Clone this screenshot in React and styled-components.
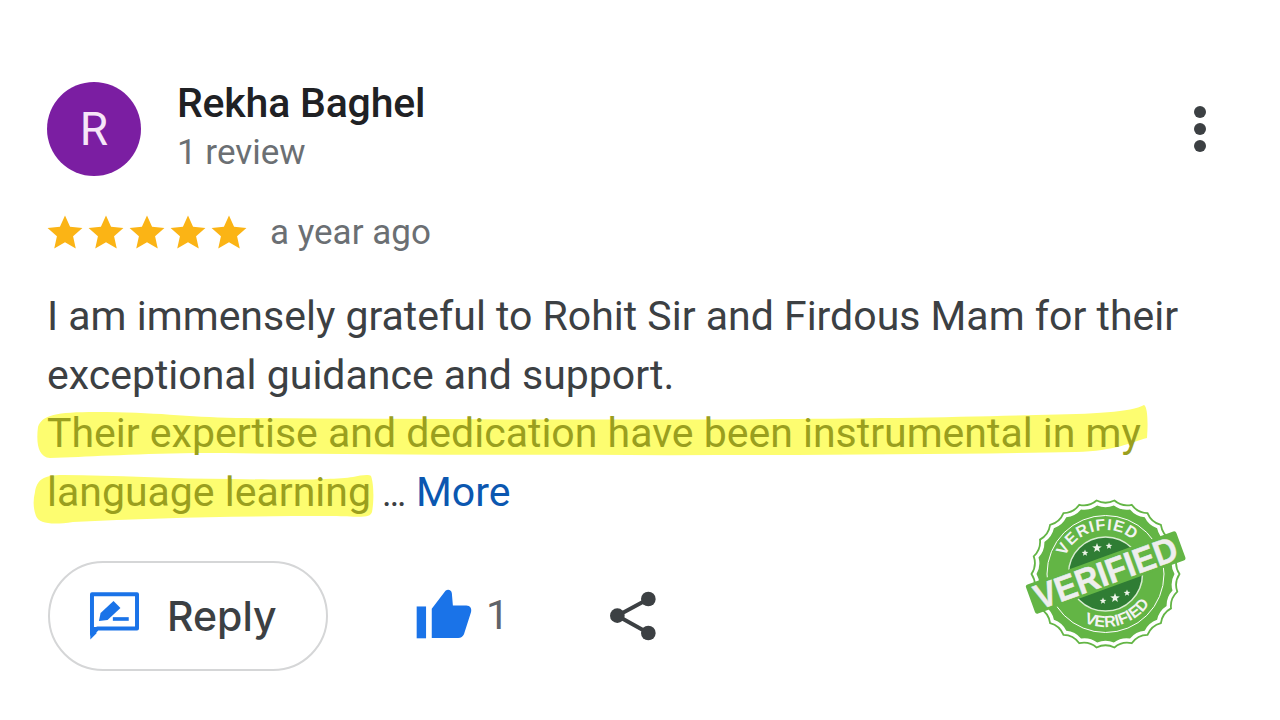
import React from "react";
import styled, { createGlobalStyle } from "styled-components";

const GlobalStyle = createGlobalStyle`
  html,body{margin:0;padding:0;background:#fff;}
  body{font-family:"Roboto","Liberation Sans",sans-serif;}
`;

const Card = styled.div`
  position:relative;
  isolation:isolate;
  width:1280px;height:720px;
  box-sizing:border-box;
  padding:82px 73px 0 47px;
  overflow:hidden;
  background:#fff;
`;

const Header = styled.div`
  display:flex;
  align-items:flex-start;
`;

const Avatar = styled.div`
  width:94px;height:94px;
  flex:none;
  border-radius:50%;
  background:#7b1ea2;
  color:#f6e6f8;
  display:flex;align-items:center;justify-content:center;
  font-size:46px;
`;

const Who = styled.div`
  margin-left:36px;
  display:flex;
  flex-direction:column;
`;

const Name = styled.div`
  font-size:41px;line-height:44px;
  font-weight:500;
  color:#202124;
  margin-top:-1px;
  letter-spacing:-0.2px;
`;

const Count = styled.div`
  font-size:35px;line-height:40px;
  margin-top:8px;
  color:#6b6f73;
`;

const Menu = styled.svg`
  margin-left:auto;
  margin-top:23px;
  flex:none;
`;

const Rating = styled.div`
  display:flex;
  align-items:center;
  margin-top:36px;
  height:40px;
`;

const Stars = styled.div`
  display:flex;
  gap:3px;
  margin-left:-1px;
  margin-right:22px;
`;

const When = styled.span`
  font-size:35px;
  color:#6b6f73;
`;

const Body = styled.div`
  margin-top:35px;
  font-size:41px;
  line-height:58.7px;
  color:#3c4043;
`;

const Line = styled.div`
  white-space:nowrap;
`;

const Marked = styled.span`
  position:relative;
  color:#9a9f1e;
`;

const Stroke = styled.svg`
  position:absolute;
  z-index:-1;
  left:${(p) => p.$left}px;
  top:${(p) => p.$top}px;
`;

const Dots = styled.span`
  color:#3c4043;
  margin-left:11px;
  font-size:36px;
`;

const More = styled.span`
  color:#0b57b0;
  margin-left:10px;
`;

const Actions = styled.div`
  display:flex;
  align-items:center;
  margin-top:37px;
`;

const ReplyButton = styled.button`
  width:280px;height:110px;
  box-sizing:border-box;
  margin-left:1px;
  padding:0 0 0 39px;
  display:flex;align-items:center;
  border:2px solid #d5d6d7;
  border-radius:55px;
  background:#fff;
  color:#3c4043;
  font-family:"Inter","Roboto",sans-serif;
  font-weight:500;
  font-size:41px;
  svg{margin-right:27px;}
`;

const LikeCount = styled.span`
  margin-left:13px;
  margin-top:2px;
  font-size:41px;
  color:#5f6368;
`;

const Like = styled.div`
  display:flex;align-items:center;
  margin-left:88px;
  margin-top:-4px;
`;

const Share = styled.svg`
  margin-left:101px;
  margin-top:1px;
`;

const Badge = styled.svg`
  position:absolute;
  left:1010px;top:485px;
`;

const Star = () => (
  <svg width="38" height="38" viewBox="0 0 24 24">
    <path fill="#fbb415" d="M12 1.500l3.200 7.200 7.800.8-5.900 5.200 1.700 7.700-6.800-4-6.800 4 1.700-7.700L1 9.500l7.800-.8z" />
  </svg>
);

// scalloped edge of the seal
const scallop = (cx, cy, r, depth, n) => {
  let d = "";
  for (let i = 0; i < n; i++) {
    const a0 = (i / n) * Math.PI * 2;
    const a1 = ((i + 1) / n) * Math.PI * 2;
    const am = (a0 + a1) / 2;
    const x0 = cx + r * Math.cos(a0), y0 = cy + r * Math.sin(a0);
    const x1 = cx + r * Math.cos(a1), y1 = cy + r * Math.sin(a1);
    const qx = cx + (r - depth) * Math.cos(am), qy = cy + (r - depth) * Math.sin(am);
    d += (i === 0 ? `M${x0.toFixed(1)} ${y0.toFixed(1)}` : "") + `Q${qx.toFixed(1)} ${qy.toFixed(1)} ${x1.toFixed(1)} ${y1.toFixed(1)}`;
  }
  return d + "Z";
};

const tinyStar = (x, y, r) => {
  let pts = [];
  for (let i = 0; i < 10; i++) {
    const a = -Math.PI / 2 + (i * Math.PI) / 5;
    const rr = i % 2 ? r * 0.42 : r;
    pts.push(`${(x + rr * Math.cos(a)).toFixed(1)},${(y + rr * Math.sin(a)).toFixed(1)}`);
  }
  return pts.join(" ");
};

const VerifiedBadge = () => (
  <Badge width="190" height="176" viewBox="-10 -10 190 176">
    <defs>
      <path id="arcTop" d="M41.500 79A44 44 0 0 1 129.500 79" />
      <path id="arcBottom" d="M32.500 79A53 53 0 0 0 138.500 79" />
    </defs>
    <path d={scallop(85.5, 79, 74, 5, 26)} fill="#fff" stroke="#63b545" strokeWidth="1.800" />
    <path d={scallop(85.5, 79, 69, 4, 26)} fill="#63b545" />
    <circle cx="85.500" cy="79" r="58.500" fill="none" stroke="#fff" strokeWidth="1" />
    <circle cx="85.500" cy="79" r="37" fill="#2f7d34" stroke="#d7ecd0" strokeWidth="1.500" />
    <g transform="rotate(-13 85.500 79)">
      <text fill="#f3f3f3" fontFamily="Liberation Sans, sans-serif" fontWeight="700" fontSize="16" letterSpacing="1" textAnchor="middle">
        <textPath href="#arcTop" startOffset="50%">VERIFIED</textPath>
      </text>
    </g>
    <g transform="rotate(-16 85.500 79)">
      <text fill="#f3f3f3" fontFamily="Liberation Sans, sans-serif" fontWeight="700" fontSize="16" textAnchor="middle">
        <textPath href="#arcBottom" startOffset="50%">VERIFIED</textPath>
      </text>
    </g>
    <g fill="#eef5ea">
      <polygon points={tinyStar(65, 58, 3.500)} />
      <polygon points={tinyStar(77, 53, 5)} />
      <polygon points={tinyStar(89, 51, 3.500)} />
      <polygon points={tinyStar(83, 106, 3.500)} />
      <polygon points={tinyStar(95, 103, 5)} />
      <polygon points={tinyStar(107, 98, 3.500)} />
    </g>
    <g transform="rotate(-20 85.500 77)">
      <rect x="5.500" y="62" width="160" height="31" rx="2.500" fill="#63b545" />
      <text x="85.500" y="90" fill="#eeeeee" stroke="#eeeeee" strokeWidth="0.500" textAnchor="middle" fontFamily="Liberation Sans, sans-serif" fontWeight="700" fontSize="35" textLength="150" lengthAdjust="spacingAndGlyphs">VERIFIED</text>
    </g>
  </Badge>
);

export default function App() {
  return (
    <>
      <GlobalStyle />
      <Card>
        <Header>
          <Avatar>R</Avatar>
          <Who>
            <Name>Rekha Baghel</Name>
            <Count>1 review</Count>
          </Who>
          <Menu width="14" height="48" viewBox="0 0 14 48">
            <circle cx="7" cy="7" r="6" fill="#3c4043" />
            <circle cx="7" cy="24" r="6" fill="#3c4043" />
            <circle cx="7" cy="41" r="6" fill="#3c4043" />
          </Menu>
        </Header>

        <Rating>
          <Stars>
            <Star /><Star /><Star /><Star /><Star />
          </Stars>
          <When>a year ago</When>
        </Rating>

        <Body>
          <Line>I am immensely grateful to Rohit Sir and Firdous Mam for their</Line>
          <Line>exceptional guidance and support.</Line>
          <Line>
            <Marked>
              <Stroke $left={-11} $top={-4} width="1112" height="56" viewBox="0 0 1112 56">
                <path fill="#fdfd70" d="M2 22C6 10 20 7 60 7C120 7 150 12 200 13C500 15 800 16 1000 10C1060 9 1095 7 1108 0C1112 2 1112 20 1111 33C1095 37 1080 46 1040 47C800 52 400 50 160 48C90 49 50 52 14 53C2 52 0 38 2 22Z" />
              </Stroke>
              Their expertise and dedication have been instrumental in my
            </Marked>
          </Line>
          <Line>
            <Marked>
              <Stroke $left={-14} $top={4} width="342" height="54" viewBox="0 0 342 54">
                <path fill="#fdfd70" d="M2 20C4 8 10 3 30 3C80 3 140 7 200 7C250 8 300 8 320 5C328 3 336 2 338 4C341 12 341 30 339 40C337 46 330 45 300 44C200 44 120 46 40 50C20 53 6 52 3 44C0 36 0 28 2 20Z" />
              </Stroke>
              language learning
            </Marked>
            <Dots>…</Dots>
            <More>More</More>
          </Line>
        </Body>

        <Actions>
          <ReplyButton>
            <svg width="51" height="50" viewBox="178 124 154 150">
              <path fill="none" stroke="#1a73e8" strokeWidth="12" strokeLinejoin="round" d="M187 133H323V237H203L187 254Z" />
              <path fill="#1a73e8" d="M182 232H200V252L182 270Z" />
              <path fill="#1a73e8" d="M208 214L213 190L252 154L273 175L234 211Z" />
              <path fill="none" stroke="#1a73e8" strokeWidth="11" d="M250 208H298" />
            </svg>
            Reply
          </ReplyButton>
          <Like>
            <svg width="57" height="51" viewBox="50 50 170 152">
              <path fill="#1a73e8" d="M52 105H80V200H52Z" />
              <path fill="#1a73e8" d="M97 112L138 58C146 52 156 56 157 66L160 102H200C212 102 217 112 214 122L193 188C190 195 184 199 176 199H97Z" />
            </svg>
            <LikeCount>1</LikeCount>
          </Like>
          <Share width="46" height="50" viewBox="628 66 138 150">
            <path fill="none" stroke="#3c4043" strokeWidth="12" d="M743 90L650 140L743 192" />
            <circle cx="743" cy="90" r="22" fill="#3c4043" />
            <circle cx="650" cy="140" r="22" fill="#3c4043" />
            <circle cx="743" cy="192" r="22" fill="#3c4043" />
          </Share>
        </Actions>

        <VerifiedBadge />
      </Card>
    </>
  );
}
